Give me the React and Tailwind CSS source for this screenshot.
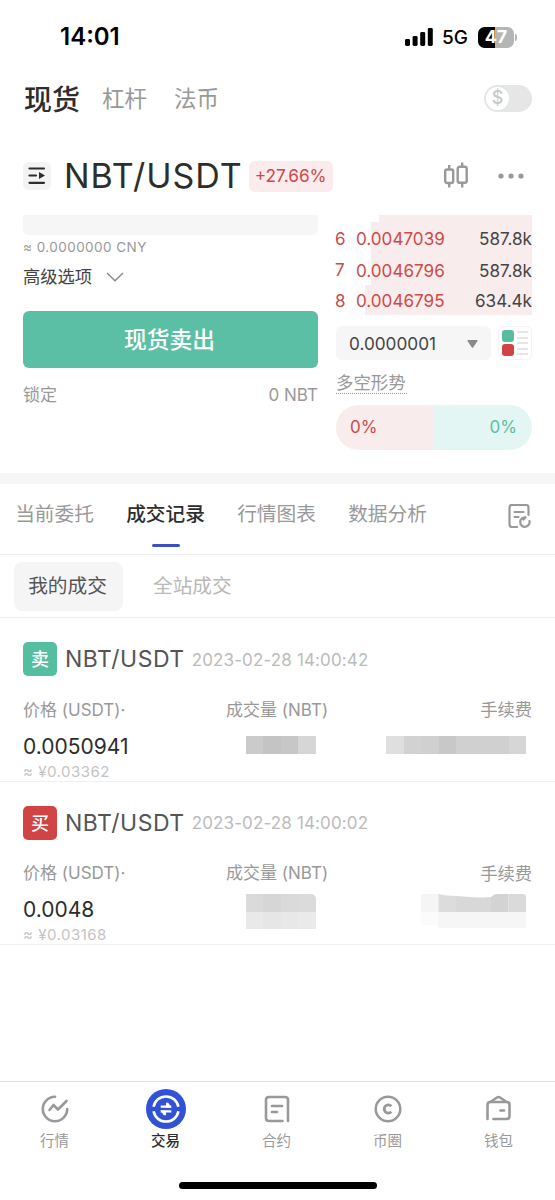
import React from 'react';

const asks = [
  { level: 6, price: '0.0047039', amount: '587.8k', height: 'h-8', bar: 'w-[161px]' },
  { level: 7, price: '0.0046796', amount: '587.8k', height: 'h-[31px]', bar: 'w-[161px]' },
  { level: 8, price: '0.0046795', amount: '634.4k', height: 'h-[30px]', bar: 'w-[167px]' },
];

const tabs = ['当前委托', '成交记录', '行情图表', '数据分析'];

const trades = [
  {
    side: '卖',
    color: 'bg-[#55bda0]',
    time: '2023-02-28 14:00:42',
    price: '0.0050941',
    cny: '≈ ¥0.03362',
  },
  {
    side: '买',
    color: 'bg-[#d04544]',
    time: '2023-02-28 14:00:02',
    price: '0.0048',
    cny: '≈ ¥0.03168',
  },
];

const StatusBar = () => (
  <div className="flex h-[74px] items-center pl-[60px] pr-[38px] text-black">
    <span className="text-[24px] font-semibold leading-none">14:01</span>
    <div className="ml-auto flex items-center">
      <svg width="28" height="20" viewBox="0 0 28 20" fill="currentColor">
        <rect x="0" y="12" width="5" height="7" rx="1.4" />
        <rect x="7.6" y="9" width="5" height="10" rx="1.4" />
        <rect x="15.2" y="5" width="5" height="14" rx="1.4" />
        <rect x="22.8" y="1" width="5" height="18" rx="1.4" />
      </svg>
      <span className="ml-[9px] text-[19px] font-medium leading-none">5G</span>
      <div className="ml-[10px] flex h-[21px] w-9 items-center justify-center rounded-[6.5px] bg-linear-to-r from-black from-47% to-[#b5b5b5] to-47% text-[18px] font-bold leading-none text-white">
        47
      </div>
      <div className="ml-px h-[7px] w-[2px] rounded-r-full bg-[#b5b5b5]" />
    </div>
  </div>
);

const Header = () => (
  <div className="flex h-12 items-center pl-6 pr-[23px] leading-none text-[#999]">
    <span className="pt-1 text-[28px] font-medium text-[#2d2d2d]">现货</span>
    <span className="ml-[22px] pt-[3px] text-[22.5px]">杠杆</span>
    <span className="ml-[27px] pt-[3px] text-[22.5px]">法币</span>
    <div className="ml-auto flex h-[27px] w-12 items-center rounded-full bg-[#e6e6e6] p-0.5">
      <div className="flex size-[23px] items-center justify-center rounded-full bg-white text-[18px] font-medium text-[#c8c8c8]">
        $
      </div>
    </div>
  </div>
);

const PairRow = () => (
  <div className="mt-[15px] flex h-[78px] items-center pl-[23px] pr-[31px]">
    <div className="flex size-7 items-center justify-center rounded-md bg-[#f3f3f3]">
      <svg width="28" height="28" viewBox="0 0 28 28" fill="none" stroke="#2d2d2d" strokeWidth="2.2">
        <path d="M6.500 6.500h14.500M6.500 13.500h6.500M6.500 20.800h14.500" strokeLinecap="round" />
        <path d="M16 10l6 3.500-6 3.500z" fill="#2d2d2d" stroke="none" />
      </svg>
    </div>
    <span className="ml-[13px] text-[34px] leading-none tracking-[0.95px] text-[#2d2d2d]">NBT/USDT</span>
    <span className="ml-1.5 flex h-[31px] w-[84px] items-center justify-center rounded-md bg-[#fbebec] text-[17.3px] leading-none text-[#cc4a4a]">
      +27.66%
    </span>
    <svg className="ml-auto" width="26" height="28" viewBox="0 0 26 28" fill="none" stroke="#999" strokeWidth="2.4">
      <rect x="2.200" y="7.5" width="8" height="13.500" rx="2" />
      <path d="M6.200 3v4.500M6.200 21v4.500M19.200 0.500v4M19.200 21v4.500" />
      <rect x="14.700" y="4.700" width="9" height="16" rx="2" />
    </svg>
    <svg className="ml-[29px]" width="26" height="6" viewBox="0 0 26 6" fill="#999">
      <circle cx="3" cy="3" r="2.600" />
      <circle cx="13" cy="3" r="2.600" />
      <circle cx="23" cy="3" r="2.600" />
    </svg>
  </div>
);

const OrderForm = () => (
  <div className="w-[295px] leading-none">
    <div className="h-5 rounded-b-md bg-[#f6f6f6]" />
    <div className="flex h-6 items-center pt-0.5 text-[13.5px] tracking-[0.45px] text-[#999]">≈ 0.0000000 CNY</div>
    <div className="flex h-[34px] items-center pt-px text-[17.3px] text-[#444]">
      高级选项
      <svg className="ml-3.5" width="18" height="10" viewBox="0 0 18 10" fill="none" stroke="#888" strokeWidth="1.4">
        <path d="M1 1l8 7.800L17 1" />
      </svg>
    </div>
    <button className="mt-[18px] flex h-[57px] w-full items-center justify-center rounded-md bg-[#5abfa4] pt-0.5 pr-0.5 text-[22.8px] font-medium text-white">
      现货卖出
    </button>
    <div className="flex h-[54px] items-center justify-between pt-px text-[17px] text-[#999]">
      <span>锁定</span>
      <span>0 NBT</span>
    </div>
  </div>
);

const OrderBook = () => (
  <div className="w-[196px] leading-none">
    <div className="ml-auto h-[7px] w-[153px] bg-[#f9ecec]" />
    {asks.map((ask) => (
      <div key={ask.level} className={`relative flex items-center pt-0.5 text-[17px] ${ask.height}`}>
        <div className={`absolute inset-y-0 right-0 bg-[#f9ecec] ${ask.bar}`} />
        <span className="relative -ml-px w-[21px] text-[#cc4a4a]">{ask.level}</span>
        <span className="relative text-[17.100px] text-[#cc4a4a]">{ask.price}</span>
        <span className="relative ml-auto text-[17.100px] text-[#444]">{ask.amount}</span>
      </div>
    ))}
    <div className="mt-[11px] flex h-[34px] justify-between">
      <div className="flex w-[155px] items-center justify-between rounded-md bg-[#f6f6f6] pl-[13px] pr-[13px] pt-0.5 text-[17.200px] text-[#444]">
        0.0000001
        <svg width="11" height="8" viewBox="0 0 11 8" fill="#8a8a8a">
          <path d="M1 0h9q1 0 .5 1L6.300 7.300q-.8 1-1.600 0L.5 1Q0 0 1 0z" />
        </svg>
      </div>
      <div className="flex w-[34px] items-center justify-center gap-[3px] rounded-[5px] border border-[#f4f4f4]">
        <div className="flex flex-col gap-0.5">
          <div className="size-3 rounded-[3px] bg-[#55bda0]" />
          <div className="size-3 rounded-[3px] bg-[#d04544]" />
        </div>
        <div className="flex flex-col gap-[3.500px]">
          {[0, 1, 2, 3, 4].map((i) => (
            <div key={i} className="h-0.5 w-[11px] bg-[#e6e6e6]" />
          ))}
        </div>
      </div>
    </div>
    <div className="mt-[13px] flex h-[21px] w-[71px] items-center whitespace-nowrap border-b-[1.500px] border-dotted border-[#999] text-[17.400px] text-[#999]">
      多空形势
    </div>
    <div className="mt-[11px] flex h-[45px] overflow-hidden rounded-full text-[17px]">
      <div className="flex w-[98px] items-center bg-[#f9ecec] pl-3.5 text-[#cc4a4a]">0%</div>
      <div className="flex w-[98px] items-center justify-end bg-[#e4f6f3] pr-[15px] text-[#5abfa4]">0%</div>
    </div>
  </div>
);

const TabBar = () => (
  <div className="flex h-[71px] border-b border-[#ececec] pl-[15px] pr-6 text-[19.7px] leading-none text-[#999]">
    {tabs.map((tab, i) => (
      <div key={tab} className="mr-8 flex w-[79px] flex-col items-center whitespace-nowrap pt-[21px]">
        <span className={i === 1 ? 'font-medium text-[#2d2d2d]' : ''}>{tab}</span>
        {i === 1 && <div className="mt-[19px] h-[3px] w-7 rounded-full bg-[#3a50c0]" />}
      </div>
    ))}
    <svg className="ml-auto mt-5" width="23" height="24" viewBox="0 0 23 24" fill="none" stroke="#999" strokeWidth="2.200" strokeLinecap="round">
      <path d="M9 23H4q-2.500 0-2.500-2.500V3.500Q1.500 1 4 1h14q2.500 0 2.500 2.500V11" />
      <path d="M6.500 8h9M6.500 13h4" />
      <path d="M21.500 17a4.700 4.700 0 1 1-4.500-3.600M15.500 15.500l2-2.200" />
    </svg>
  </div>
);

const SubTabs = () => (
  <div className="flex h-[63px] items-center border-b border-[#f0f0f0] pl-3.5 text-[19.7px] leading-none">
    <div className="flex h-[49px] w-[109px] items-center justify-center rounded-lg bg-[#f5f5f5] pt-px pr-0.5 text-[#555]">
      我的成交
    </div>
    <span className="ml-[30px] pt-px text-[#b8b8b8]">全站成交</span>
  </div>
);

const MosaicRow = ({ cells, className = 'h-[18px]' }) => (
  <div className={`flex ${className}`}>
    {cells.map((cell, i) => (
      <div key={i} className={`w-[17.500px] ${cell}`} />
    ))}
  </div>
);

const SellMosaic = () => (
  <>
    <div className="absolute left-[222.500px] top-[37px]">
      <MosaicRow cells={['bg-[#cbcbcb]', 'bg-[#c4c4c4]', 'bg-[#c7c7c7]', 'bg-[#d6d6d6]']} />
    </div>
    <div className="absolute right-[6px] top-[37px]">
      <MosaicRow
        cells={[
          'bg-[#dfdfdf]',
          'bg-[#d2d2d2]',
          'bg-[#d0d0d0]',
          'bg-[#c8c8c8]',
          'bg-[#d0d0d0]',
          'bg-[#d0d0d0]',
          'bg-[#d0d0d0]',
          'bg-[#d6d6d6]',
        ]}
      />
    </div>
  </>
);

const BuyMosaic = () => (
  <>
    <div className="absolute left-[222.500px] top-[31px] overflow-hidden rounded-tr-[5px]">
      <MosaicRow cells={['bg-[#dadada]', 'bg-[#d6d6d6]', 'bg-[#dadada]', 'bg-[#dbdbdb]']} />
      <MosaicRow cells={['bg-[#e9e9e9]', 'bg-[#e6e6e6]', 'bg-[#e8e8e8]', 'bg-[#eaeaea]']} className="h-[17px]" />
    </div>
    <svg className="absolute right-[6px] top-[31px]" width="105" height="35" viewBox="0 0 105 35">
      <path d="M0 0h17.500v18H0z" fill="#f5f5f5" />
      <path d="M17.500 0l8 1.500 9.500.5v16H17.500z" fill="#dcdcdc" />
      <path d="M35 2l17.500 1.200 10 .3L70 3v15H35z" fill="#d8d8d8" />
      <path d="M70 3q3-3 6-3h11.500v18H70z" fill="#d3d3d3" />
      <path d="M87.500 0H102q3 0 3 3v15H87.500z" fill="#dadada" />
      <path d="M0 18h17.500v13H0z" fill="#fbfbfb" />
      <path d="M17.500 18H105v16H17.500z" fill="#f6f6f6" />
    </svg>
  </>
);

const TradeRecord = ({ trade, children }) => (
  <div className="h-[163.500px] border-b border-[#f0f0f0] px-[23px] pt-6 leading-none">
    <div className="flex h-[34px] items-center">
      <div className={`flex size-[34px] items-center justify-center rounded-[5px] pt-0.5 text-[18px] font-medium text-white ${trade.color}`}>
        {trade.side}
      </div>
      <span className="ml-2 pt-px text-[23px] tracking-[0.5px] text-[#555]">NBT/USDT</span>
      <span className="ml-[7px] pt-0.5 text-[17px] tracking-[0.13px] text-[#bbb]">{trade.time}</span>
    </div>
    <div className="relative mt-[23px] flex h-5 items-center pt-0.5 text-[17px] text-[#999]">
      <span className="w-[203px]">价格 (USDT)·</span>
      <span>成交量 (NBT)</span>
      <span className="ml-auto text-[17.300px]">手续费</span>
      {children}
    </div>
    <div className="mt-4 flex h-[22px] items-center text-[21px] text-[#2d2d2d]">{trade.price}</div>
    <div className="mt-1.5 flex h-4 items-center text-[15px] tracking-[0.5px] text-[#c4c4c4]">{trade.cny}</div>
  </div>
);

const MarketIcon = () => (
  <svg width="28" height="28" viewBox="0 0 28 28" fill="none" stroke="#999" strokeWidth="2.600" strokeLinecap="round" strokeLinejoin="round">
    <path d="M14 1.800A12.200 12.200 0 1 0 26.200 14" />
    <path d="M8.500 15l4-5 4.500 4.500L25.500 6" />
  </svg>
);

const TradeIcon = () => (
  <svg width="40" height="40" viewBox="0 0 40 40" fill="none" stroke="#fff" strokeLinecap="butt">
    <circle cx="20" cy="20" r="20" fill="#3152d6" stroke="none" />
    <path d="M7.600 17.800a12.600 12.600 0 0 1 24.800 0M7.600 22.200a12.600 12.600 0 0 0 24.800 0" strokeWidth="2.600" />
    <path d="M14.700 17.700H25.300M25.300 22.300H14.700" strokeWidth="2.200" />
    <path d="M20 13.800h2.200l3.300 4.800h-5.500zM20 26.200h-2.200l-3.300-4.800h5.500z" fill="#fff" stroke="none" />
  </svg>
);

const ContractIcon = () => (
  <svg width="28" height="28" viewBox="0 0 28 28" fill="none" stroke="#999" strokeWidth="2.600" strokeLinecap="round">
    <path d="M25 26V5q0-3-3-3H6Q3 2 3 5v18q0 3 3 3h13.500" />
    <path d="M9 11h10M9 17h5" />
  </svg>
);

const CoinIcon = () => (
  <svg width="28" height="28" viewBox="0 0 28 28" fill="none" stroke="#999" strokeWidth="2.500">
    <circle cx="14" cy="14" r="12.300" />
    <path d="M17.300 11.200a4.100 4.100 0 1 0 0 5.600" strokeWidth="2.800" />
  </svg>
);

const WalletIcon = () => (
  <svg width="28" height="28" viewBox="0 0 28 28" fill="none" stroke="#999" strokeWidth="2.600" strokeLinecap="round" strokeLinejoin="round">
    <path d="M2.500 24V10q0-3 3-3h16q3 0 3 3v11q0 3-3 3h-13" />
    <path d="M6 6.500l6-4q1.500-1 3 0l6 4" />
    <path d="M15.500 15.500h3.500" />
  </svg>
);

const navItems = [
  { label: '行情', icon: MarketIcon },
  { label: '交易', icon: TradeIcon, active: true },
  { label: '合约', icon: ContractIcon },
  { label: '币圈', icon: CoinIcon },
  { label: '钱包', icon: WalletIcon },
];

const BottomNav = () => (
  <div className="mt-auto h-[119px] border-t-[1.500px] border-[#e2e2e2]">
    <div className="-ml-px mr-px flex">
      {navItems.map(({ label, icon: Icon, active }) => (
        <div key={label} className="flex flex-1 flex-col items-center pt-[7px]">
          <div className="flex h-10 items-center">
            <Icon />
          </div>
          <span className={`mt-[5px] text-[14.500px] leading-none ${active ? 'font-medium text-[#2d2d2d]' : 'text-[#999]'}`}>
            {label}
          </span>
        </div>
      ))}
    </div>
    <div className="mx-auto mt-[33px] h-[7px] w-[198px] rounded-full bg-black" />
  </div>
);

const App = () => {
  return (
    <div className="flex h-[1200px] w-[555px] flex-col overflow-hidden bg-white font-['Inter','Noto_Sans_CJK_SC',sans-serif]">
      <StatusBar />
      <Header />
      <PairRow />
      <div className="flex h-[258px] justify-between px-[23px]">
        <OrderForm />
        <OrderBook />
      </div>
      <div className="h-[11px] bg-[#f6f6f6]" />
      <TabBar />
      <SubTabs />
      <TradeRecord trade={trades[0]}>
        <SellMosaic />
      </TradeRecord>
      <TradeRecord trade={trades[1]}>
        <BuyMosaic />
      </TradeRecord>
      <BottomNav />
    </div>
  );
};

export default App;
